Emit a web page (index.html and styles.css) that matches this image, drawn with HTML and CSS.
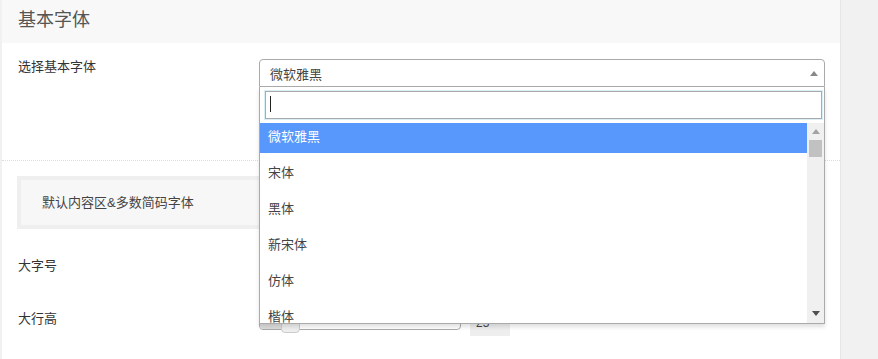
FILE: index.html
```html
<!DOCTYPE html>
<html lang="zh-CN">
<head>
  <meta charset="UTF-8" />
  <meta name="viewport" content="width=device-width, initial-scale=1.0" />
  <title>基本字体</title>
  <link rel="stylesheet" href="styles.css">
</head>
<body>
  <div class="panel">
    <h3 class="section-title">基本字体</h3>

    <div class="field field-main">
      <label class="field-label">选择基本字体</label>
      <div class="field-control">
        <div class="select2">
          <div class="select2-choice">
            <span class="choice-text">微软雅黑</span>
            <span class="choice-arrow"></span>
          </div>
          <div class="select2-drop">
            <div class="select2-search">
              <div class="search-input"><span class="caret"></span></div>
            </div>
            <div class="select2-results">
              <ul class="results-list">
                <li class="highlighted">微软雅黑</li>
                <li>宋体</li>
                <li>黑体</li>
                <li>新宋体</li>
                <li>仿体</li>
                <li>楷体</li>
              </ul>
              <div class="scrollbar">
                <span class="sb-btn"><span class="sb-up"></span></span>
                <span class="sb-thumb"></span>
                <span class="sb-track"></span>
                <span class="sb-btn"><span class="sb-down"></span></span>
              </div>
            </div>
          </div>
        </div>
      </div>
    </div>

    <div class="group-box">默认内容区&amp;多数简码字体</div>

    <div class="field field-size">
      <label class="field-label">大字号</label>
      <div class="field-control slider-row">
        <div class="slider">
          <div class="slider-range"></div>
          <span class="slider-handle"></span>
        </div>
        <div class="slider-value">16</div>
      </div>
    </div>

    <div class="field field-size">
      <label class="field-label">大行高</label>
      <div class="field-control slider-row">
        <div class="slider">
          <div class="slider-range"></div>
          <span class="slider-handle"></span>
        </div>
        <div class="slider-value">25</div>
      </div>
    </div>
  </div>
</body>
</html>
```

FILE: styles.css
```css
* { box-sizing: border-box; margin: 0; padding: 0; }
body {
  font-family: "Liberation Sans", "Noto Sans CJK SC", sans-serif;
  font-size: 13px;
  color: #444;
  background-color: #f1f1f1;
  padding-left: 2px;
  height: 359px;
  overflow: hidden;
}

.panel {
  width: 839px;
  min-height: 359px;
  background-color: #fff;
  border-right: 1px solid #e6e6e6;
}

.section-title {
  height: 43px;
  line-height: 41px;
  padding-left: 16px;
  background-color: #f8f8f8;
  font-size: 18px;
  font-weight: normal;
  color: #555;
}

/* Field rows */
.field {
  display: grid;
  grid-template-columns: 241px 1fr;
  padding: 0 15px 0 16px;
}
.field-main {
  height: 118px;
  padding-top: 16px;
  border-bottom: 1px dotted #dcdcdc;
}
.field-main .field-label {
  line-height: 15px;
}
.field-label {
  color: #333;
  line-height: 20px;
}

/* Select box */
.select2 {
  position: relative;
}
.select2-choice {
  display: flex;
  align-items: center;
  justify-content: space-between;
  height: 28px;
  padding: 0 6px 0 10px;
  border: 1px solid #aaa;
  border-radius: 4px 4px 0 0;
  background-color: #fff;
  color: #444;
}
.choice-arrow {
  width: 0;
  height: 0;
  border-left: 4px solid transparent;
  border-right: 4px solid transparent;
  border-bottom: 5px solid #888;
  margin-top: 1px;
}
.select2-drop {
  position: absolute;
  top: 28px;
  left: 0;
  right: 0;
  z-index: 10;
  background-color: #fff;
  border: 1px solid #aaa;
  border-top: none;
  box-shadow: 0 3px 4px rgba(0, 0, 0, 0.12);
}
.select2-search {
  padding: 4px 2px 4px 5px;
}
.search-input {
  height: 28px;
  border: 1px solid #aaa;
  box-shadow: 0 0 0 1px #d9eef7;
  padding: 4px 0 0 4px;
}
.caret {
  display: block;
  width: 1px;
  height: 16px;
  background-color: #222;
}
.select2-results {
  display: flex;
  height: 200px;
  overflow: hidden;
}
.results-list {
  flex: 1;
  list-style: none;
  overflow: hidden;
  margin-top: -6px;
}
.results-list li {
  height: 36px;
  padding: 12px 8px 0;
  line-height: 16px;
  color: #444;
}
.results-list li.highlighted {
  background-color: #5897fb;
  color: #fff;
}

/* Scrollbar */
.scrollbar {
  width: 17px;
  display: flex;
  flex-direction: column;
  align-items: center;
  background-color: #f0f0f0;
}
.sb-btn {
  display: flex;
  align-items: center;
  justify-content: center;
  width: 17px;
  height: 17px;
}
.sb-up {
  border-left: 4px solid transparent;
  border-right: 4px solid transparent;
  border-bottom: 5px solid #a3a3a3;
  margin-top: -1px;
}
.sb-down {
  border-left: 4px solid transparent;
  border-right: 4px solid transparent;
  border-top: 5px solid #505050;
  margin-top: -2px;
}
.sb-thumb {
  width: 13px;
  height: 17px;
  background-color: #c1c1c1;
}
.sb-track {
  flex: 1;
}

/* Group box */
.group-box {
  height: 53px;
  margin: 15px 16px 0 15px;
  padding-left: 21px;
  line-height: 45px;
  border: 4px solid #efefef;
  background-color: #f7f7f7;
  color: #444;
}

/* Slider rows */
.field-size {
  height: 53px;
}
.group-box + .field-size {
  margin-top: 27px;
}
.slider-row {
  display: flex;
  align-items: flex-start;
}
.slider {
  position: relative;
  width: 202px;
  height: 17px;
  margin-top: 4px;
  border: 1px solid #aaa;
  border-radius: 4px;
  background-color: #fff;
}
.slider-range {
  width: 22px;
  height: 100%;
  background-color: #ddd;
  border-radius: 3px 0 0 3px;
}
.slider-handle {
  position: absolute;
  top: -1px;
  left: 21px;
  width: 19px;
  height: 20px;
  border: 1px solid #ccc;
  border-radius: 4px;
  background-color: #eee;
}
.slider-value {
  width: 40px;
  height: 25px;
  margin: 2px 0 0 9px;
  padding-left: 6px;
  line-height: 25px;
  font-size: 12px;
  background-color: #eee;
  color: #444;
}
```
